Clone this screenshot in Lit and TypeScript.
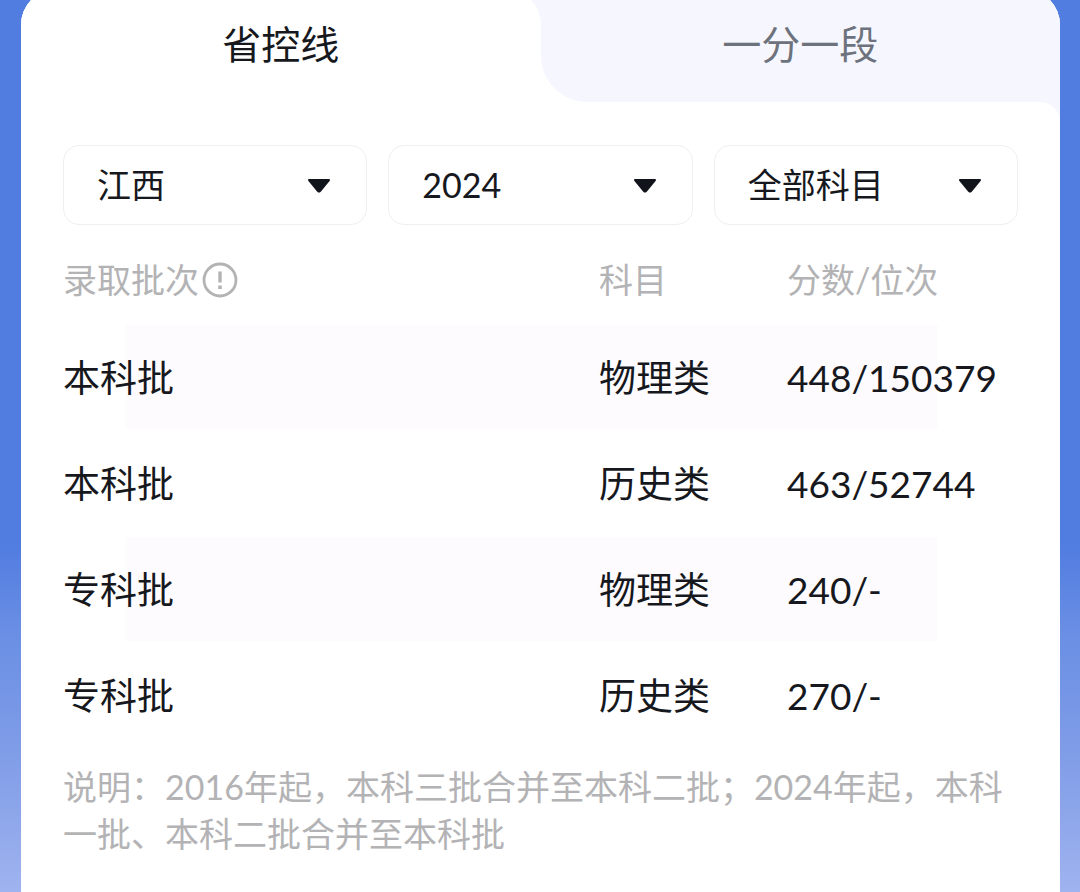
import { LitElement, html, css } from "lit";
import { customElement, state } from "lit/decorators.js";

interface ScoreRow {
  batch: string;
  subject: string;
  score: string;
}

interface Filter {
  id: string;
  label: string;
  options: string[];
}

const TABS = ["省控线", "一分一段"];

const FILTERS: Filter[] = [
  { id: "province", label: "省份", options: ["江西"] },
  { id: "year", label: "年份", options: ["2024"] },
  { id: "subject", label: "科目", options: ["全部科目"] },
];

const ROWS: ScoreRow[] = [
  { batch: "本科批", subject: "物理类", score: "448/150379" },
  { batch: "本科批", subject: "历史类", score: "463/52744" },
  { batch: "专科批", subject: "物理类", score: "240/-" },
  { batch: "专科批", subject: "历史类", score: "270/-" },
];

@customElement("filter-select")
export class FilterSelect extends LitElement {
  static properties = { filter: { attribute: false } };
  declare filter: Filter;

  static styles = css`
    :host {
      display: block;
      min-width: 0;
    }
    .field {
      display: grid;
      align-items: center;
    }
    .select,
    .arrow {
      grid-area: 1 / 1;
    }
    .select {
      appearance: none;
      box-sizing: border-box;
      width: 100%;
      height: 80px;
      margin: 0;
      padding: 0 64px 2px 33px;
      border: 1px solid #efeff1;
      border-radius: 16px;
      background: #fff;
      color: #16181d;
      font: inherit;
      font-size: 34px;
    }
    .arrow {
      justify-self: end;
      width: 24px;
      height: 16px;
      margin-right: 36px;
      pointer-events: none;
    }
  `;

  render() {
    return html`
      <div class="field">
        <select class="select" id=${this.filter.id} aria-label=${this.filter.label}>
          ${this.filter.options.map((o) => html`<option>${o}</option>`)}
        </select>
        <svg class="arrow" viewBox="0 0 24 16" aria-hidden="true">
          <path
            d="M2 3H22L13 14Q12 15 11 14Z"
            fill="#12141c"
            stroke="#12141c"
            stroke-width="2"
            stroke-linejoin="round"
          />
        </svg>
      </div>
    `;
  }
}

@customElement("app-root")
export class AppRoot extends LitElement {
  @state() private active = 0;

  static styles = css`
    :host {
      display: flex;
      flex-direction: column;
      box-sizing: border-box;
      min-height: 100vh;
      padding: 0 20px 0 21px;
      overflow: hidden;
      background: linear-gradient(#517ce0 0%, #517ce0 61%, #6a8fe4 71%, #7f9ce7 84%, #9fb3ef 100%);
      color: #16181d;
      font-family: Lato, "Noto Sans CJK SC", sans-serif;
    }
    .card {
      flex: 1;
      display: flex;
      flex-direction: column;
      margin-top: -11px;
      border-radius: 36px 36px 0 0;
      overflow: hidden;
      background: #f6f7fe;
    }
    .tabs {
      display: grid;
      grid-template-columns: 1fr 1fr;
      background: linear-gradient(#f6f7fe 50%, #fff 50%);
    }
    .tab {
      height: 113px;
      margin: 0;
      padding: 0 0 8px;
      border: 0;
      border-radius: 0 0 0 46px;
      background: #f6f7fe;
      color: #6d727d;
      font: inherit;
      font-size: 39px;
      cursor: pointer;
    }
    .tab.active {
      border-radius: 0 36px 0 0;
      background: #fff;
      color: #16181d;
    }
    .panel {
      flex: 1;
      padding: 43px 42px 36px;
      border-radius: 0 20px 0 0;
      background: #fff;
    }
    .filters {
      display: grid;
      grid-template-columns: repeat(3, 1fr);
      gap: 21px;
      margin-bottom: 10px;
    }
    .table {
      width: 100%;
      table-layout: fixed;
      border-collapse: collapse;
    }
    .subject {
      width: 188px;
    }
    .score {
      width: 231px;
    }
    .head {
      height: 90px;
      padding: 0;
      color: #b3b3b5;
      font-size: 34px;
      font-weight: 400;
      line-height: 48px;
      text-align: left;
    }
    .label {
      display: flex;
      align-items: center;
      gap: 3px;
    }
    .info {
      display: block;
      width: 36px;
      height: 36px;
      margin: 0;
      padding: 0;
      border: 0;
      background: none;
      color: inherit;
    }
    .icon {
      display: block;
      width: 100%;
      height: 100%;
    }
    .row:nth-child(odd) {
      background: linear-gradient(#fdfbfe, #fdfbfe) 44% 0 / 85% 98% no-repeat;
    }
    .cell {
      height: 106px;
      padding: 0;
      font-size: 37px;
      line-height: 48px;
      white-space: nowrap;
    }
    .note {
      margin: 14px 0 0;
      color: #b3b3b5;
      font-size: 34px;
      line-height: 47px;
    }
  `;

  render() {
    return html`
      <main class="card">
        <div class="tabs" role="tablist">
          ${TABS.map(
            (t, i) => html`<button
              class="tab ${i === this.active ? "active" : ""}"
              role="tab"
              aria-selected=${i === this.active}
              @click=${() => (this.active = i)}
            >${t}</button>`
          )}
        </div>
        <section class="panel" role="tabpanel">
          <div class="filters">
            ${FILTERS.map((f) => html`<filter-select .filter=${f}></filter-select>`)}
          </div>
          <table class="table">
            <thead>
              <tr>
                <th class="head" scope="col">
                  <div class="label">
                    录取批次<button class="info" aria-label="录取批次说明">
                      <svg class="icon" viewBox="0 0 36 36" fill="none" aria-hidden="true">
                        <circle cx="18" cy="18" r="16" stroke="currentColor" stroke-width="2.8" />
                        <path d="M18 9.5V20.5" stroke="currentColor" stroke-width="3.4" />
                        <path d="M18 23.5V27" stroke="currentColor" stroke-width="3.6" />
                      </svg>
                    </button>
                  </div>
                </th>
                <th class="head subject" scope="col">科目</th>
                <th class="head score" scope="col">分数/位次</th>
              </tr>
            </thead>
            <tbody>
              ${ROWS.map(
                (r) => html`<tr class="row">
                  <td class="cell">${r.batch}</td>
                  <td class="cell">${r.subject}</td>
                  <td class="cell">${r.score}</td>
                </tr>`
              )}
            </tbody>
          </table>
          <p class="note">说明：2016年起，本科三批合并至本科二批；2024年起，本科一批、本科二批合并至本科批</p>
        </section>
      </main>
    `;
  }
}
